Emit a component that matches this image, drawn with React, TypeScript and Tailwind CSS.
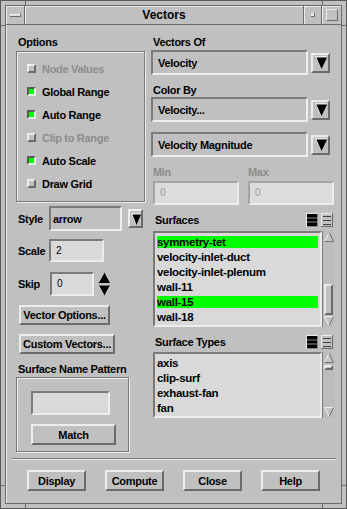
import React from "react";

const RAISED =
  "border-2 border-t-[#ececec] border-l-[#ececec] border-r-[#6b6b6b] border-b-[#6b6b6b]";
const SUNKEN =
  "border-2 border-t-[#7a7a7a] border-l-[#7a7a7a] border-r-[#ececec] border-b-[#ececec]";
const SUNKEN_DIM =
  "border-2 border-t-[#a4a4a4] border-l-[#a4a4a4] border-r-[#ececec] border-b-[#ececec]";
const GROUP =
  "border border-[#7a7a7a] shadow-[inset_1px_1px_0_#ececec,1px_1px_0_#ececec]";

function ArrowBtn({ className, small }: { className: string; small?: boolean }) {
  const w = small ? 10 : 12;
  const h = small ? 12 : 13;
  return (
    <div className={`${RAISED} flex items-center justify-center bg-[#c0c0c0] ${className}`}>
      <svg width={w} height={h} viewBox={`0 0 ${w} ${h}`}>
        <polygon points={`0,0 ${w},0 ${w / 2},${h}`} fill="#e8e8e8" />
        <polygon points={`1.5,1.5 ${w},1.5 ${w / 2 + 0.5},${h}`} fill="#000" />
      </svg>
    </div>
  );
}

function Dropdown({ text, className }: { text: string; className: string }) {
  return (
    <div className={`${SUNKEN} flex items-center bg-[#c0c0c0] ${className}`}>{text}</div>
  );
}

function Check({ on, label, disabled }: { on?: boolean; label: string; disabled?: boolean }) {
  return (
    <div className="flex h-[23px] items-center gap-[6px] pl-[10px]">
      <span
        className={`h-[9px] w-[9px] ${
          on
            ? "border-2 border-t-[#5a5a5a] border-l-[#5a5a5a] border-r-[#ececec] border-b-[#ececec] bg-[#00ff00]"
            : "border-2 border-t-[#ececec] border-l-[#ececec] border-r-[#6b6b6b] border-b-[#6b6b6b] bg-[#c0c0c0]"
        }`}
      />
      <span className={disabled ? "text-[#8c8c8c]" : "text-black"}>{label}</span>
    </div>
  );
}

function Button({ text, className }: { text: string; className: string }) {
  return (
    <div className={`${RAISED} flex items-center justify-center bg-[#c0c0c0] ${className}`}>
      {text}
    </div>
  );
}

function ListIcons() {
  return (
    <div className="ml-auto flex gap-[3px]">
      <svg width="12" height="14" viewBox="0 0 12 14">
        <rect x="0" y="0" width="12" height="14" fill="#8a8a8a" />
        <rect x="1" y="1" width="10" height="12" fill="#000" />
        <rect x="1" y="4.5" width="10" height="1" fill="#8a8a8a" />
        <rect x="1" y="8.5" width="10" height="1" fill="#8a8a8a" />
        <rect x="0" y="0" width="12" height="1" fill="#e8e8e8" />
        <rect x="0" y="0" width="1" height="14" fill="#e8e8e8" />
      </svg>
      <svg width="12" height="14" viewBox="0 0 12 14">
        <rect x="0" y="0" width="12" height="14" fill="#c0c0c0" />
        <rect x="0" y="0" width="12" height="1" fill="#ececec" />
        <rect x="0" y="0" width="1" height="14" fill="#ececec" />
        <rect x="11" y="0" width="1" height="14" fill="#6b6b6b" />
        <rect x="0" y="13" width="12" height="1" fill="#6b6b6b" />
        <rect x="2" y="3" width="8" height="1" fill="#404040" />
        <rect x="2" y="7" width="8" height="1" fill="#404040" />
        <rect x="2" y="11" width="8" height="1" fill="#404040" />
      </svg>
    </div>
  );
}

function ScrollArrow({ up }: { up?: boolean }) {
  return (
    <svg width="10" height="10" viewBox="0 0 10 10" className="mx-auto shrink-0">
      {up ? (
        <>
          <polygon points="5,0.5 9.5,9.5 0.5,9.5" fill="#c4c4c4" />
          <line x1="5" y1="0.5" x2="0.5" y2="9.5" stroke="#f0f0f0" />
          <line x1="5" y1="0.5" x2="9.5" y2="9.5" stroke="#707070" />
          <line x1="0.5" y1="9.5" x2="9.5" y2="9.5" stroke="#707070" />
        </>
      ) : (
        <>
          <polygon points="0.5,0.5 9.5,0.5 5,9.5" fill="#c4c4c4" />
          <line x1="0.5" y1="0.5" x2="9.5" y2="0.5" stroke="#f0f0f0" />
          <line x1="0.5" y1="0.5" x2="5" y2="9.5" stroke="#f0f0f0" />
          <line x1="9.5" y1="0.5" x2="5" y2="9.5" stroke="#707070" />
        </>
      )}
    </svg>
  );
}

function ListBox({
  items,
  selected,
  className,
  gapTop,
  thumbH,
}: {
  items: string[];
  selected: string[];
  className: string;
  gapTop: string;
  thumbH: string;
}) {
  return (
    <div className={`ml-[2px] flex ${className}`}>
      <div className={`${SUNKEN} w-[169px] bg-[#d9d9d9] px-[1px] pt-[1px]`}>
        {items.map((it) => (
          <div key={it} className="flex h-[15px] items-center px-[1px]">
            <div
              className={`h-[12px] w-full text-[11.5px] leading-[12px] ${
                selected.includes(it) ? "bg-[#00ff00]" : ""
              }`}
            >
              {it}
            </div>
          </div>
        ))}
      </div>
      <div className="flex w-[12px] flex-col border-l border-[#7a7a7a] bg-[#bcbcbc] py-[1px]">
        <ScrollArrow up />
        <div className={gapTop} />
        <div className={`${RAISED} mx-[1px] ${thumbH} bg-[#c0c0c0]`} />
        <div className="flex-1" />
        <ScrollArrow />
      </div>
    </div>
  );
}

function Tick({ className }: { className: string }) {
  return <span className={`absolute bg-[#6b6b6b] ${className}`} />;
}

export default function App() {
  return (
    <div className="relative flex h-[509px] w-[347px] flex-col border border-[#5a5a5a] bg-[#c0c0c0] p-[4px] font-['Liberation_Sans',Arial,sans-serif] text-[11px] font-bold leading-[14px] tracking-[-0.3px] text-black">
      <Tick className="left-[24px] top-0 h-[5px] w-px" />
      <Tick className="left-[321px] top-0 h-[5px] w-px" />
      <Tick className="left-0 top-[24px] h-px w-[5px]" />
      <Tick className="right-0 top-[24px] h-px w-[5px]" />
      <Tick className="left-0 top-[484px] h-px w-[5px]" />
      <Tick className="right-0 top-[484px] h-px w-[5px]" />
      <Tick className="bottom-0 left-[24px] h-[5px] w-px" />
      <Tick className="bottom-0 left-[321px] h-[5px] w-px" />

      {/* title bar */}
      <div className="flex h-[20px] shrink-0 border border-[#6b6b6b]">
        <div className="flex w-[19px] items-center justify-center border-r border-[#6b6b6b] shadow-[inset_1px_1px_0_#ececec]">
          <span className="h-[3px] w-[11px] border-b border-r border-[#6b6b6b] bg-[#d8d8d8] shadow-[inset_1px_1px_0_#f4f4f4]" />
        </div>
        <div className="flex flex-1 items-center justify-center border-r border-[#6b6b6b] text-[12px] tracking-[0px] shadow-[inset_1px_1px_0_#ececec]">
          Vectors
        </div>
        <div className="flex w-[18px] items-center justify-center border-r border-[#6b6b6b] shadow-[inset_1px_1px_0_#ececec]">
          <span className="h-[4px] w-[4px] border-b border-r border-[#6b6b6b] bg-[#e8e8e8]" />
        </div>
        <div className="flex flex-1 max-w-[19px] items-center justify-center shadow-[inset_1px_1px_0_#ececec]">
          <span className="h-[12px] w-[12px] border border-t-[#ececec] border-l-[#ececec] border-r-[#6b6b6b] border-b-[#6b6b6b]" />
        </div>
      </div>

      {/* client area */}
      <div className="flex flex-1 flex-col border border-t-0 border-[#6b6b6b] shadow-[inset_1px_0_0_#ececec]">
        <div className="flex gap-[6px] pl-[10px]">
          {/* left column */}
          <div className="flex w-[129px] flex-col">
            <div className="mt-[10px] h-[14px] pl-[2px]">Options</div>
            <div className={`mt-[2px] h-[151px] ${GROUP} pt-[5px]`}>
              <Check label="Node Values" disabled />
              <Check label="Global Range" on />
              <Check label="Auto Range" on />
              <Check label="Clip to Range" disabled />
              <Check label="Auto Scale" on />
              <Check label="Draw Grid" />
            </div>

            <div className="mt-[4px] flex h-[25px] items-center">
              <div className="w-[33px] pl-[2px]">Style</div>
              <Dropdown text="arrow" className="h-[25px] w-[73px] pl-[2px] font-bold" />
              <ArrowBtn small className="ml-[6px] h-[19px] w-[15px]" />
            </div>

            <div className="mt-[8px] flex h-[23px] items-center">
              <div className="w-[33px] pl-[2px]">Scale</div>
              <div className={`${SUNKEN} flex h-[23px] w-[55px] items-center bg-[#d9d9d9] pl-[5px] text-[10px] font-normal`}>
                2
              </div>
            </div>

            <div className="mt-[10px] flex h-[24px] items-center">
              <div className="w-[34px] pl-[2px]">Skip</div>
              <div className={`${SUNKEN} flex h-[24px] w-[44px] items-center bg-[#d9d9d9] pl-[5px] text-[10px] font-normal`}>
                0
              </div>
              <svg width="12" height="24" viewBox="0 0 12 24" className="ml-[4px]">
                <polygon points="6,0 12,11 0,11" fill="#000" />
                <line x1="6" y1="0.5" x2="0.5" y2="10.5" stroke="#e8e8e8" />
                <polygon points="0,13 12,13 6,24" fill="#000" />
                <line x1="0.5" y1="13.5" x2="11.5" y2="13.5" stroke="#707070" />
                <line x1="0.5" y1="13.5" x2="6" y2="23.5" stroke="#e8e8e8" />
              </svg>
            </div>

            <Button text="Vector Options..." className="ml-[3px] mt-[9px] h-[20px] w-[91px]" />
            <Button text="Custom Vectors..." className="ml-[3px] mt-[9px] h-[20px] w-[96px]" />

            <div className="mt-[8px] h-[14px] whitespace-nowrap pl-[2px]">Surface Name Pattern</div>
            <div className={`mt-[1px] h-[75px] w-[113px] ${GROUP} pl-[14px] pt-[13px]`}>
              <div className={`${SUNKEN} h-[24px] w-[79px] bg-[#d9d9d9]`} />
              <Button text="Match" className="mt-[9px] h-[21px] w-[85px]" />
            </div>
          </div>

          {/* right column */}
          <div className="flex w-[183px] flex-col">
            <div className="mt-[10px] h-[14px] pl-[2px]">Vectors Of</div>
            <div className="mt-[1px] flex h-[25px] items-center">
              <Dropdown text="Velocity" className="h-[25px] w-[157px] pl-[5px]" />
              <ArrowBtn className="ml-[3px] h-[20px] w-[19px]" />
            </div>
            <div className="mt-[8px] h-[14px] pl-[2px]">Color By</div>
            <div className="flex h-[25px] items-center">
              <Dropdown text="Velocity..." className="h-[25px] w-[157px] pl-[5px]" />
              <ArrowBtn className="ml-[3px] h-[20px] w-[19px]" />
            </div>
            <div className="mt-[10px] flex h-[25px] items-center">
              <Dropdown text="Velocity Magnitude" className="h-[25px] w-[157px] pl-[5px]" />
              <ArrowBtn className="ml-[3px] h-[20px] w-[19px]" />
            </div>

            <div className="mt-[8px] flex h-[14px] gap-[9px] pl-[2px] text-[#8c8c8c]">
              <div className="w-[86px]">Min</div>
              <div className="w-[86px]">Max</div>
            </div>
            <div className="mt-[2px] flex h-[24px] gap-[9px] pl-[2px]">
              <div className={`${SUNKEN_DIM} flex w-[86px] items-center bg-[#dcdcdc] pl-[5px] text-[10px] font-normal text-[#9a9a9a]`}>
                0
              </div>
              <div className={`${SUNKEN_DIM} flex w-[86px] items-center bg-[#dcdcdc] pl-[5px] text-[10px] font-normal text-[#9a9a9a]`}>
                0
              </div>
            </div>

            <div className="mt-[8px] flex h-[14px] items-center pl-[4px] pr-[1px]">
              Surfaces
              <ListIcons />
            </div>
            <ListBox
              className="mt-[4px] h-[96px]"
              items={[
                "symmetry-tet",
                "velocity-inlet-duct",
                "velocity-inlet-plenum",
                "wall-11",
                "wall-15",
                "wall-18",
              ]}
              selected={["symmetry-tet", "wall-15"]}
              gapTop="h-[42px]"
              thumbH="h-[31px]"
            />

            <div className="mt-[8px] flex h-[14px] items-center pl-[4px] pr-[1px]">
              Surface Types
              <ListIcons />
            </div>
            <ListBox
              className="mt-[3px] h-[66px]"
              items={["axis", "clip-surf", "exhaust-fan", "fan"]}
              selected={[]}
              gapTop="h-[2px]"
              thumbH="h-[5px]"
            />
          </div>
        </div>

        <div className="mx-[5px] mt-[6px] h-[2px] border-t border-b border-t-[#7a7a7a] border-b-[#ececec]" />

        <div className="mt-[10px] flex gap-[19px] pl-[21px]">
          <Button text="Display" className="h-[21px] w-[59px]" />
          <Button text="Compute" className="h-[21px] w-[59px]" />
          <Button text="Close" className="h-[21px] w-[59px]" />
          <Button text="Help" className="h-[21px] w-[59px]" />
        </div>
      </div>
    </div>
  );
}
